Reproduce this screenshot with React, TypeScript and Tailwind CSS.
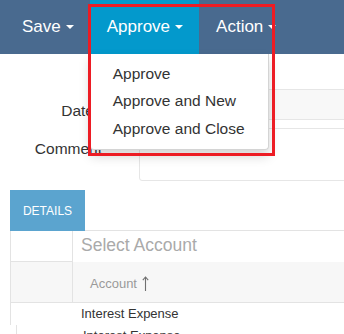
import React from "react";

function Caret() {
  return (
    <span className="ml-[5px] inline-block w-0 h-0 border-x-[4px] border-x-transparent border-t-[4px] border-t-white" />
  );
}

export default function App() {
  return (
    <div
      className="relative w-[344px] h-[334px] overflow-hidden bg-white"
      style={{ fontFamily: '"Liberation Sans", Arial, sans-serif' }}
    >
      {/* Top bar */}
      <div className="relative h-[54px] bg-[#496a8f] flex items-stretch pl-[5px]">
        <div className="flex items-center pl-[17px] pr-[16px] text-white text-[17px]">
          Save
          <Caret />
        </div>
        <div className="relative flex items-center pl-[17px] pr-[16px] text-white text-[17px] bg-[#0399cc]">
          Approve
          <Caret />
          <div className="absolute left-0 top-full z-10 w-[179px] bg-white border border-[#d4d4d4] border-t-0 rounded-b-[4px] shadow-[0_6px_12px_rgba(0,0,0,0.175)] pt-[6px] pb-[7px]">
            {["Approve", "Approve and New", "Approve and Close"].map((t) => (
              <div key={t} className="pl-[22px] text-[15.5px] leading-[27.3px] text-[#333] whitespace-nowrap">
                {t}
              </div>
            ))}
          </div>
        </div>
        <div className="flex items-center px-[17px] text-white text-[17px]">
          Action
          <Caret />
        </div>
      </div>

      {/* Form */}
      <div className="pt-[35px]">
        <div className="flex h-[31px]">
          <div className="w-[102px] shrink-0 text-right pr-[8px] pt-[12px] text-[15.5px] leading-[20px] text-[#333]">
            Date
          </div>
          <div className="ml-[37px] w-[260px] shrink-0 h-[31px] bg-[#f8f8f8] border border-[#e6e6e6]" />
        </div>
        <div className="flex mt-[8px] h-[53px]">
          <div className="w-[102px] shrink-0 text-right pt-[11px] text-[15.5px] leading-[20px] text-[#333]">
            Comment
          </div>
          <div className="ml-[37px] w-[260px] shrink-0 h-[53px] bg-white border border-[#e6e6e6] rounded-[3px]" />
        </div>
      </div>

      {/* Details */}
      <div className="mt-[9px] pl-[10px]">
        <div className="flex">
          <div className="w-[75px] h-[41px] bg-[#5ba4cf] text-white text-[12px] flex items-center justify-center">
            DETAILS
          </div>
          <div className="flex-1 h-[41px] border-b border-[#e3e3e3]" />
        </div>
        <div className="border-l border-[#e3e3e3]">
          <div className="flex h-[31px]">
            <div className="w-[62px] shrink-0 border-r border-b border-[#e3e3e3]" />
            <div className="flex-1 flex items-center pl-[8px] pb-[2px] text-[17.5px] text-[#aaaaaa] whitespace-nowrap">
              Select Account
            </div>
          </div>
          <div className="flex h-[41px] bg-[#f7f7f7] border-b border-[#e3e3e3]">
            <div className="w-[62px] shrink-0 border-r border-[#e3e3e3]" />
            <div className="flex-1 flex items-center pl-[17px] pt-[4px] text-[13px] text-[#9a9a9a]">
              Account
              <svg className="ml-[5px] mb-[1px]" width="7" height="15" viewBox="0 0 7 15" fill="none">
                <path d="M3.5 1 V15" stroke="#707070" strokeWidth="1.1" />
                <path d="M0.8 4.2 L3.5 1 L6.2 4.2" stroke="#707070" strokeWidth="1.1" />
              </svg>
            </div>
          </div>
          <div className="flex h-[22px]">
            <div className="w-[62px] shrink-0" />
            <div className="flex-1 flex items-center pl-[8px] text-[13px] text-[#333] whitespace-nowrap">
              Interest Expense
            </div>
          </div>
        </div>
        <div className="ml-[6px] border-l border-[#e3e3e3] h-[30px] flex">
          <div className="w-[56px] shrink-0" />
          <div className="pl-[10px] pt-[3px] text-[13px] text-[#333] whitespace-nowrap leading-[16px]">
            Interest Expense
          </div>
        </div>
      </div>

      {/* Red annotation box */}
      <div className="absolute left-[88px] top-[4px] w-[187px] h-[152px] border-[3px] border-[#ed1c24] z-20 pointer-events-none" />
    </div>
  );
}
